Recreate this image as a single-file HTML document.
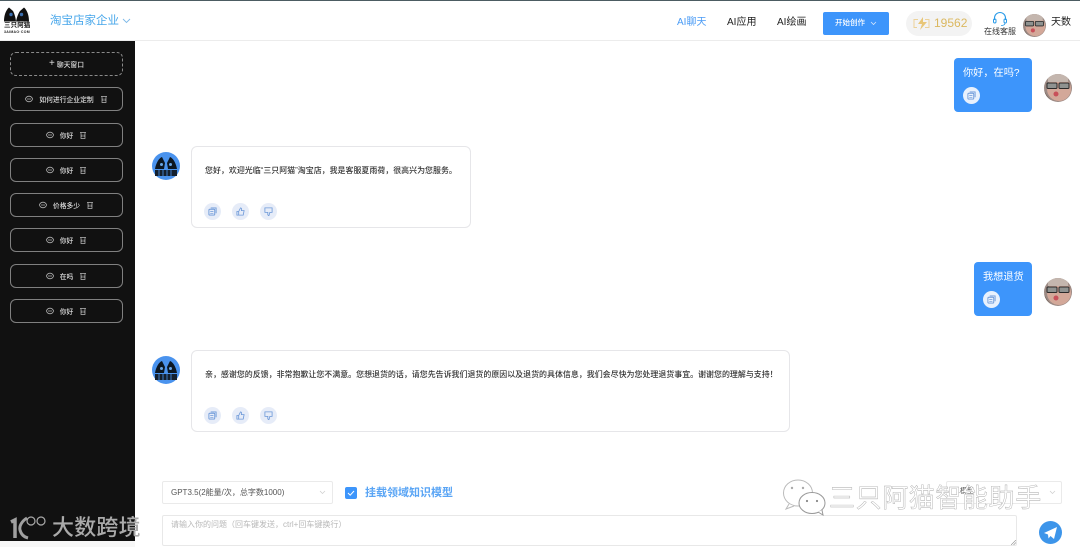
<!DOCTYPE html>
<html lang="zh"><head><meta charset="utf-8"><title>AI聊天</title>
<style>
*{box-sizing:border-box;margin:0;padding:0}
html,body{width:1080px;height:547px;overflow:hidden;background:#fff}
body{font-family:"Liberation Sans","Noto Sans CJK SC",sans-serif;color:#222}
#w{position:relative;width:1080px;height:547px;overflow:hidden;filter:blur(.3px)}
.a{position:absolute;white-space:nowrap}
.b{position:absolute;left:10px;width:113px;height:24px;border:1px solid #808080;border-radius:6px;color:#ddd;font-size:6.800px;font-weight:500;display:flex;align-items:center;justify-content:center;gap:6px}
.b svg{flex:none}
.ub{position:absolute;background:#3d95fb;border-radius:4px;color:#fff;font-size:11px}
.card{position:absolute;left:191px;background:#fff;border:1px solid #e6e6e9;border-radius:6px;font-size:8px;color:#333}
.ic{position:absolute;width:17px;height:17px;border-radius:50%;background:#e6ecf8}
.ic svg,.uc svg{position:absolute;left:4px;top:4px}
.uc{position:absolute;width:17px;height:17px;border-radius:50%;background:#e8f1fd}
</style></head><body><div id="w">
<svg width="0" height="0" style="position:absolute"><defs>
<clipPath id="cc"><circle cx="14" cy="14" r="14"/></clipPath>
<symbol id="face" viewBox="0 0 28 28"><g clip-path="url(#cc)"><rect width="28" height="28" fill="#9c8a84"/><circle cx="15" cy="15" r="12" fill="#d3a899"/><path d="M4 0h20v8H4z" fill="#c4b6ae"/><rect x="3" y="9" width="10" height="5.500" rx="1" fill="#8f9290" stroke="#2a2a2a"/><rect x="15" y="9" width="10" height="5.500" rx="1" fill="#8f9290" stroke="#2a2a2a"/><ellipse cx="12" cy="20" rx="2.500" ry="2.500" fill="#c8505a"/><path d="M0 16c3 6 6 10 10 12H0z" fill="#7a6a62"/><path d="M28 18c-3 5-5 8-9 10h9z" fill="#b8a49c"/></g></symbol>
<symbol id="bot" viewBox="0 0 28 28"><circle cx="14" cy="14" r="14" fill="#4a93ee"/><path d="M3 17C4 11 7 6 10 5l3 6-1 6zM25 17C24 11 21 6 18 5l-3 6 1 6z" fill="#0c1722"/><circle cx="9.500" cy="12.500" r="1.500" fill="#6aa6e6"/><circle cx="18.500" cy="12.500" r="1.500" fill="#6aa6e6"/><rect x="3" y="18" width="22" height="6" fill="#14202e"/><path d="M7 18v6M11 18v6M15 18v6M19 18v6" stroke="#4a93ee" stroke-width=".8"/></symbol>
<symbol id="cp" viewBox="0 0 10 10"><rect x="1" y="2.500" width="6.500" height="6.500" rx="1" fill="none" stroke="#6c98d8"/><path d="M3 1h6v6" fill="none" stroke="#6c98d8"/><path d="M2.500 5h3.500M2.500 7h3.500" stroke="#6c98d8" stroke-width=".7"/></symbol>
<symbol id="up" viewBox="0 0 10 10"><path d="M1 5h2v4H1zM3 5l2-4c1 0 1.500 1 1.200 2L6 4h3l-1 5H3z" fill="none" stroke="#6c98d8" stroke-width=".9"/></symbol>
<symbol id="dn" viewBox="0 0 10 10"><path d="M1 1h8v5H6.500L5.500 9.500C4.500 9.500 4 8.500 4.200 7.500L4.300 6H1z" fill="none" stroke="#6c98d8" stroke-width=".9"/></symbol>
<symbol id="ch" viewBox="0 0 8 8"><ellipse cx="4" cy="4" rx="3.400" ry="2.800" fill="none" stroke="#bbb" stroke-width=".8"/><path d="M2 4h4" stroke="#bbb" stroke-width=".7"/></symbol>
<symbol id="tr" viewBox="0 0 8 8"><path d="M1 1.500h6M2 1.500v6h4v-6M3 3.500v2.500M5 3.500v2.500" fill="none" stroke="#bbb" stroke-width=".7"/></symbol>
</defs></svg>

<!-- header -->
<div class="a" style="left:0;top:0;width:1080px;height:1px;background:#4c5c62"></div>
<div class="a" style="left:0;top:40px;width:1080px;height:1px;background:#ececec"></div>
<svg class="a" style="left:0;top:0" width="40" height="34" viewBox="0 0 40 34"><path d="M4 21.500C4 15 6 10 9 7.500L13 11C14.500 14 15.500 17 16 21.500zM29 21.500C29 15 27 10 24 7.500L20 11C18 14 17 17 16 21.500z" fill="#111"/><circle cx="11" cy="14.500" r="1.700" fill="#3b6fb0"/><circle cx="21.500" cy="14.500" r="1.700" fill="#3b6fb0"/></svg>
<div class="a" style="left:4px;top:22px;font-size:6.500px;line-height:7px;color:#111;font-weight:bold;letter-spacing:.1px">三只阿猫</div>
<div class="a" style="left:4px;top:30px;font-size:3.500px;line-height:4px;color:#222;letter-spacing:.3px;font-weight:bold">3AIMAO·COM</div>
<div class="a" style="left:50px;top:13px;font-size:11.500px;line-height:16px;color:#46a6ea">淘宝店家企业</div>
<svg class="a" style="left:122px;top:18px" width="9" height="6" viewBox="0 0 9 6"><path d="M1 1l3.500 3.500L8 1" fill="none" stroke="#7db9e8" stroke-width=".9"/></svg>
<div class="a" style="left:677px;top:16px;font-size:10px;line-height:14px;color:#4a9bf5">AI聊天</div>
<div class="a" style="left:727px;top:16px;font-size:10px;line-height:14px;color:#222">AI应用</div>
<div class="a" style="left:777px;top:16px;font-size:10px;line-height:14px;color:#222">AI绘画</div>
<div class="a" style="left:823px;top:12px;width:66px;height:23px;background:#3d95fb;border-radius:2px"></div>
<div class="a" style="left:835px;top:17px;font-size:7.500px;line-height:12px;color:#fff;font-weight:500">开始创作</div>
<svg class="a" style="left:870px;top:21px" width="7" height="5" viewBox="0 0 7 5"><path d="M1 1l2.500 2.500L6 1" fill="none" stroke="#d5e6fb" stroke-width=".8"/></svg>
<div class="a" style="left:906px;top:11px;width:66px;height:25px;background:#f3f3f3;border-radius:13px"></div>
<svg class="a" style="left:912px;top:16px" width="19" height="15" viewBox="0 0 19 15"><path d="M11 1L6 8h4L8 14l7-8h-4z" fill="#e8c678"/><path d="M6 3.500H2v8h3M13 3.500h4v8h-4" fill="none" stroke="#ecd298" stroke-width="1"/></svg>
<div class="a" style="left:934px;top:16px;font-size:12px;line-height:15px;color:#dbb860">19562</div>
<svg class="a" style="left:991px;top:11px" width="18" height="16" viewBox="0 0 18 16"><path d="M3.500 9V7a5.500 5.500 0 0 1 11 0v2" fill="none" stroke="#2a9be8" stroke-width="1.100"/><rect x="2.500" y="8" width="2.500" height="4" rx="1.200" fill="none" stroke="#2a9be8"/><rect x="13" y="8" width="2.500" height="4" rx="1.200" fill="none" stroke="#2a9be8"/><path d="M14 12c0 2-2 2.500-4 2.500" fill="none" stroke="#2a9be8" stroke-width=".8"/></svg>
<div class="a" style="left:984px;top:26px;font-size:8px;line-height:11px;color:#333">在线客服</div>
<svg class="a" style="left:1023px;top:14px" width="23" height="23"><use href="#face"/></svg>
<div class="a" style="left:1051px;top:16px;font-size:10px;line-height:13px;color:#222">天数</div>

<!-- sidebar -->
<div class="a" style="left:0;top:41px;width:135px;height:500px;background:#111"></div>
<div class="a" style="left:0;top:541px;width:135px;height:6px;background:#f7f7f7"></div>
<div class="b" style="top:52px;border:1px dashed #8a8a8a;gap:2px"><span style="font-size:10px;line-height:10px;font-weight:300">+</span>聊天窗口</div>
<div class="b" style="top:87px"><svg width="8" height="8"><use href="#ch"/></svg>如何进行企业定制<svg width="8" height="8"><use href="#tr"/></svg></div>
<div class="b" style="top:122.500px"><svg width="8" height="8"><use href="#ch"/></svg>你好<svg width="8" height="8"><use href="#tr"/></svg></div>
<div class="b" style="top:158px"><svg width="8" height="8"><use href="#ch"/></svg>你好<svg width="8" height="8"><use href="#tr"/></svg></div>
<div class="b" style="top:193px"><svg width="8" height="8"><use href="#ch"/></svg>价格多少<svg width="8" height="8"><use href="#tr"/></svg></div>
<div class="b" style="top:228px"><svg width="8" height="8"><use href="#ch"/></svg>你好<svg width="8" height="8"><use href="#tr"/></svg></div>
<div class="b" style="top:263.500px"><svg width="8" height="8"><use href="#ch"/></svg>在吗<svg width="8" height="8"><use href="#tr"/></svg></div>
<div class="b" style="top:299px"><svg width="8" height="8"><use href="#ch"/></svg>你好<svg width="8" height="8"><use href="#tr"/></svg></div>

<!-- messages -->
<div class="ub" style="left:954px;top:58px;width:78px;height:54px"></div>
<div class="a" style="left:963px;top:66px;font-size:10.200px;line-height:15px;color:#fff">你好，在吗?</div>
<div class="uc" style="left:963px;top:87px"><svg width="9" height="9"><use href="#cp"/></svg></div>
<svg class="a" style="left:1044px;top:74px" width="28" height="28"><use href="#face"/></svg>

<svg class="a" style="left:152px;top:152px" width="28" height="28"><use href="#bot"/></svg>
<div class="card" style="top:146px;width:280px;height:82px"></div>
<div class="a" style="left:205px;top:165px;font-size:7.960px;line-height:12px;color:#333;font-weight:500">您好，欢迎光临“三只阿猫”淘宝店，我是客服夏雨荷，很高兴为您服务。</div>
<div class="ic" style="left:204px;top:203px"><svg width="9" height="9"><use href="#cp"/></svg></div>
<div class="ic" style="left:232px;top:203px"><svg width="9" height="9"><use href="#up"/></svg></div>
<div class="ic" style="left:260px;top:203px"><svg width="9" height="9"><use href="#dn"/></svg></div>

<div class="ub" style="left:974px;top:262px;width:58px;height:54px"></div>
<div class="a" style="left:983px;top:270px;font-size:10.200px;line-height:15px;color:#fff">我想退货</div>
<div class="uc" style="left:983px;top:291px"><svg width="9" height="9"><use href="#cp"/></svg></div>
<svg class="a" style="left:1044px;top:278px" width="28" height="28"><use href="#face"/></svg>

<svg class="a" style="left:152px;top:356px" width="28" height="28"><use href="#bot"/></svg>
<div class="card" style="top:350px;width:599px;height:82px"></div>
<div class="a" style="left:205px;top:369px;font-size:7.960px;line-height:12px;color:#333;font-weight:500">亲，感谢您的反馈，非常抱歉让您不满意。您想退货的话，请您先告诉我们退货的原因以及退货的具体信息，我们会尽快为您处理退货事宜。谢谢您的理解与支持！</div>
<div class="ic" style="left:204px;top:407px"><svg width="9" height="9"><use href="#cp"/></svg></div>
<div class="ic" style="left:232px;top:407px"><svg width="9" height="9"><use href="#up"/></svg></div>
<div class="ic" style="left:260px;top:407px"><svg width="9" height="9"><use href="#dn"/></svg></div>

<!-- input area -->
<div class="a" style="left:162px;top:481px;width:171px;height:23px;border:1px solid #eaeaea;border-radius:2px"></div>
<div class="a" style="left:171px;top:486px;font-size:8px;line-height:13px;color:#555">GPT3.5(2能量/次，总字数1000)</div>
<svg class="a" style="left:319px;top:490px" width="7" height="5" viewBox="0 0 7 5"><path d="M1 1l2.500 2.500L6 1" fill="none" stroke="#ccc" stroke-width=".7"/></svg>
<div class="a" style="left:345px;top:487px;width:12px;height:12px;background:#3d95fb;border-radius:2px"></div>
<svg class="a" style="left:345px;top:487px" width="12" height="12" viewBox="0 0 12 12"><path d="M3 6l2.200 2.200L9 4" fill="none" stroke="#fff" stroke-width="1"/></svg>
<div class="a" style="left:365px;top:486px;font-size:11px;line-height:15px;color:#5aa5f5;font-weight:bold">挂载领域知识模型</div>
<div class="a" style="left:946px;top:481px;width:116px;height:23px;border:1px solid #eaeaea;border-radius:2px"></div>
<div class="a" style="left:956px;top:486px;font-size:7px;line-height:12px;color:#555">1模型</div>
<svg class="a" style="left:1049px;top:490px" width="7" height="5" viewBox="0 0 7 5"><path d="M1 1l2.500 2.500L6 1" fill="none" stroke="#ccc" stroke-width=".7"/></svg>
<div class="a" style="left:162px;top:515px;width:855px;height:31px;border:1px solid #e8e8e8;border-radius:2px"></div>
<div class="a" style="left:171px;top:519px;font-size:8px;line-height:12px;color:#b8b8b8">请输入你的问题（回车键发送，ctrl+回车键换行）</div>
<svg class="a" style="left:1011px;top:540px" width="5" height="5" viewBox="0 0 5 5"><path d="M0 5l5-5M2.500 5L5 2.500" stroke="#888" stroke-width=".6"/></svg>
<svg class="a" style="left:1039px;top:521px" width="23" height="23" viewBox="0 0 23 23"><circle cx="11.500" cy="11.500" r="11.500" fill="#3d95ea"/><path d="M5 12l13-6-3 12-3.500-3-2 2.500-.5-4z" fill="#fff"/></svg>

<!-- watermarks -->
<svg class="a" style="left:9px;top:514px" width="40" height="26" viewBox="0 0 40 26"><path d="M2 8l4-2v18" fill="none" stroke="#a0a0a0" stroke-width="3.500"/><path d="M18 4c-5 3-8 8-7 12 1 4 4 7 8 8" fill="none" stroke="#a0a0a0" stroke-width="3"/><circle cx="22" cy="7" r="4" fill="none" stroke="#aaa" stroke-width="1.200"/><circle cx="32" cy="7" r="4" fill="none" stroke="#aaa" stroke-width="1.200"/></svg>
<div class="a" style="left:52px;top:514px;font-size:22px;line-height:28px;color:#aaa;font-weight:500;letter-spacing:.2px">大数跨境</div>
<svg class="a" style="left:782px;top:478px" width="46" height="38" viewBox="0 0 46 38"><ellipse cx="16" cy="15" rx="14.500" ry="13" fill="#fff" stroke="#bbb"/><path d="M7 26l-3 5 8-3" fill="#fff" stroke="#bbb"/><ellipse cx="30" cy="25" rx="13" ry="10.500" fill="#fff" stroke="#999"/><path d="M36 34l5 3-1-5" fill="#fff" stroke="#999"/><circle cx="10" cy="10" r="1.200" fill="#aaa"/><circle cx="21" cy="10" r="1.200" fill="#aaa"/><circle cx="25" cy="23" r="1.100" fill="#888"/><circle cx="35" cy="23" r="1.100" fill="#888"/></svg>
<div class="a" style="left:829px;top:480px;font-size:26px;line-height:36px;color:#fff;-webkit-text-stroke:.4px #a8a8a8;letter-spacing:.6px">三只阿猫智能助手</div>
</div></body></html>
